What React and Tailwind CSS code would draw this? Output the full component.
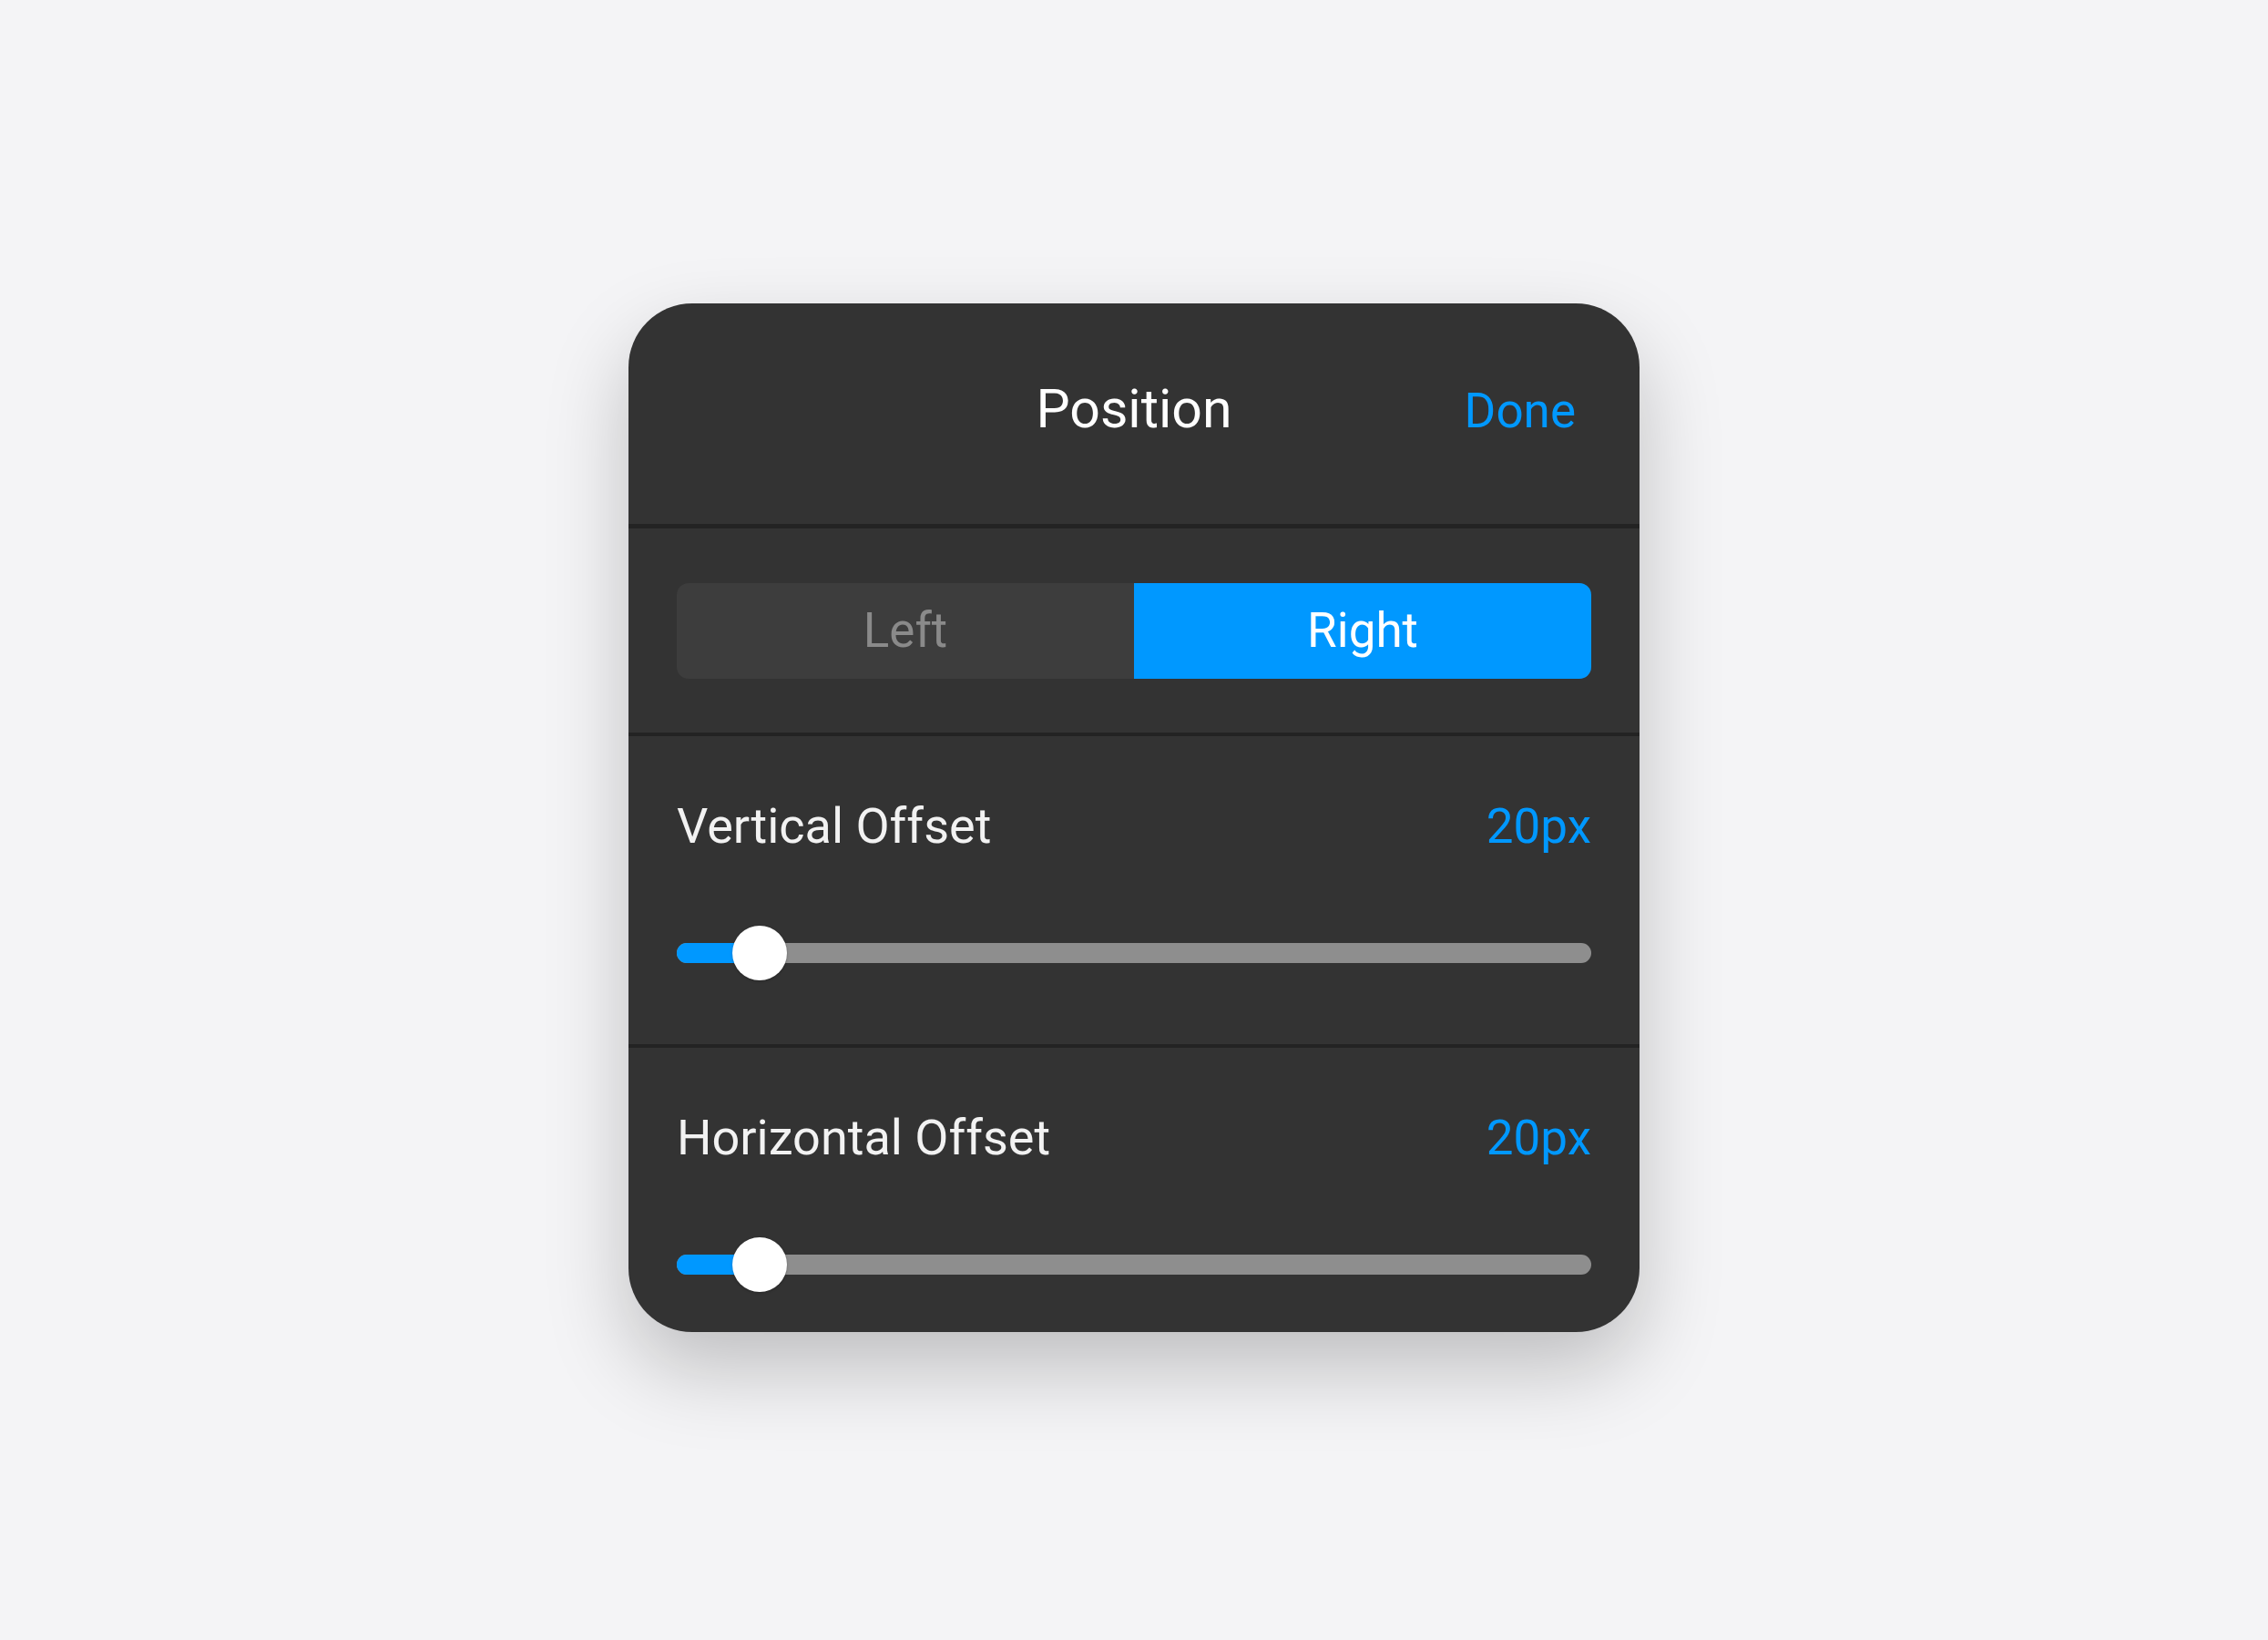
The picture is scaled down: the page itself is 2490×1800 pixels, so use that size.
import React from "react";

function Slider({ thumbLeft }) {
  return (
    <div className="relative h-[60px] flex items-center">
      <div className="w-full h-[22px] rounded-full bg-[#8e8e8e] overflow-hidden flex">
        <div className="h-full bg-[#0098ff]" style={{ width: thumbLeft + 30 }} />
      </div>
      <div
        className="absolute top-0 w-[60px] h-[60px] rounded-full bg-white shadow-[0_1px_3px_rgba(0,0,0,0.25)]"
        style={{ left: thumbLeft }}
      />
    </div>
  );
}

function SliderSection({ label, value, height }) {
  return (
    <div className="px-[53px] pt-[72px] shrink-0" style={{ height }}>
      <div className="flex items-baseline justify-between leading-none">
        <span className="text-[54px] text-[#f2f2f2]">{label}</span>
        <span className="text-[53px] text-[#0098ff]">{value}</span>
      </div>
      <div className="mt-[82px]">
        <Slider thumbLeft={61} />
      </div>
    </div>
  );
}

function Divider({ thick }) {
  return <div className={thick ? "h-[5px] shrink-0 bg-[#232323]" : "h-[4px] shrink-0 bg-[#232323]"} />;
}

export default function App() {
  return (
    <div
      className="min-h-screen w-full bg-[#f4f4f6] flex items-center justify-center pb-[5px]"
      style={{ fontFamily: "Roboto, 'Noto Sans', sans-serif" }}
    >
      <div className="w-[1110px] h-[1129px] rounded-[70px] bg-[#333333] overflow-hidden shadow-[0_40px_90px_rgba(0,0,0,0.22)] flex flex-col">
        <div className="h-[242px] shrink-0 grid grid-cols-[1fr_auto_1fr] items-baseline content-start px-[70px] pt-[86px] leading-none">
          <span />
          <span className="text-[59px] text-white">Position</span>
          <span className="justify-self-end text-[53px] text-[#0098ff]">Done</span>
        </div>
        <Divider thick />
        <div className="h-[224px] shrink-0 px-[53px] flex items-center">
          <div className="w-full h-[105px] rounded-[13px] bg-[#3d3d3d] grid grid-cols-2 overflow-hidden">
            <div className="flex items-center justify-center text-[53px] text-[#8a8a8a] leading-none">Left</div>
            <div className="flex items-center justify-center text-[53px] text-white bg-[#0098ff] leading-none">Right</div>
          </div>
        </div>
        <Divider />
        <SliderSection label="Vertical Offset" value="20px" height={338} />
        <Divider />
        <SliderSection label="Horizontal Offset" value="20px" height={312} />
      </div>
    </div>
  );
}
